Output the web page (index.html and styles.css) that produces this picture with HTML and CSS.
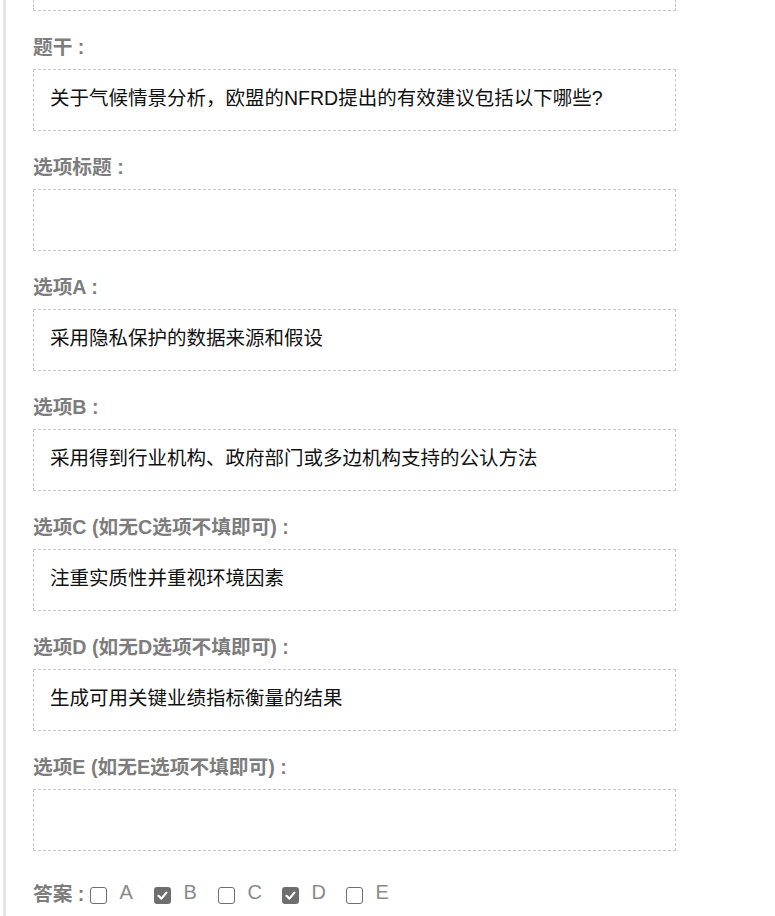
FILE: index.html
```html
<!DOCTYPE html>
<html lang="zh-CN">
<head>
    <meta charset="UTF-8">
    <meta name="viewport" content="width=device-width, initial-scale=1.0">
    <title>题目编辑</title>
    <link rel="stylesheet" href="styles.css">
</head>
<body>
    <div class="page">
        <div class="form">
            <!-- 上一个输入框（已滚出可视区域） -->
            <div class="field-box cut"></div>

            <div class="field">
                <div class="field-label">题干 :</div>
                <div class="field-box">关于气候情景分析，欧盟的NFRD提出的有效建议包括以下哪些?</div>
            </div>

            <div class="field">
                <div class="field-label">选项标题 :</div>
                <div class="field-box"></div>
            </div>

            <div class="field">
                <div class="field-label">选项A :</div>
                <div class="field-box">采用隐私保护的数据来源和假设</div>
            </div>

            <div class="field">
                <div class="field-label">选项B :</div>
                <div class="field-box">采用得到行业机构、政府部门或多边机构支持的公认方法</div>
            </div>

            <div class="field">
                <div class="field-label">选项C (如无C选项不填即可) :</div>
                <div class="field-box">注重实质性并重视环境因素</div>
            </div>

            <div class="field">
                <div class="field-label">选项D (如无D选项不填即可) :</div>
                <div class="field-box">生成可用关键业绩指标衡量的结果</div>
            </div>

            <div class="field">
                <div class="field-label">选项E (如无E选项不填即可) :</div>
                <div class="field-box"></div>
            </div>

            <!-- 答案 -->
            <div class="answer-row">
                <span class="field-label">答案 :</span>
                <label class="answer-opt"><span class="check"></span>A</label>
                <label class="answer-opt"><span class="check checked"><svg viewBox="0 0 17 17" width="17" height="17"><path d="M4.5 8.8 L7.4 11.6 L12.4 5.6" fill="none" stroke="#fff" stroke-width="2.2" stroke-linecap="round" stroke-linejoin="round"/></svg></span>B</label>
                <label class="answer-opt"><span class="check"></span>C</label>
                <label class="answer-opt"><span class="check checked"><svg viewBox="0 0 17 17" width="17" height="17"><path d="M4.5 8.8 L7.4 11.6 L12.4 5.6" fill="none" stroke="#fff" stroke-width="2.2" stroke-linecap="round" stroke-linejoin="round"/></svg></span>D</label>
                <label class="answer-opt"><span class="check"></span>E</label>
            </div>
        </div>
    </div>
</body>
</html>
```

FILE: styles.css
```css
* {
    margin: 0;
    padding: 0;
    box-sizing: border-box;
}

body {
    background: #fff;
    font-family: "Liberation Sans", "Noto Sans CJK SC", sans-serif;
    color: #111;
}

.page {
    margin-left: 3px;
    min-height: 916px;
    border-left: 3px solid #e6e6e6;
    padding-left: 27px;
}

.form {
    width: 643px;
}

/* 输入框 */
.field-box {
    height: 62px;
    border: 1px dashed #c8c8c8;
    padding: 0 16px 4px;
    line-height: 56px;
    font-size: 19.5px;
    white-space: nowrap;
}

.field-box.cut {
    height: 11px;
    padding: 0;
    border-top: none;
}

.field {
    padding-top: 24px;
}

.field-label {
    height: 24px;
    line-height: 24px;
    margin-bottom: 10px;
    font-size: 19.7px;
    font-weight: bold;
    color: #7d7d7d;
}

/* 答案 */
.answer-row {
    display: flex;
    align-items: center;
    height: 38px;
    margin-top: 24px;
}

.answer-row .field-label {
    margin-bottom: 0;
    margin-right: 6px;
}

.answer-opt {
    display: flex;
    align-items: center;
    width: 64px;
    padding-bottom: 4px;
    font-size: 20px;
    line-height: 24px;
    color: #8a8a8a;
}

.check {
    flex-shrink: 0;
    width: 17px;
    height: 17px;
    margin: 6px 12px 0 0;
    border: 1.5px solid #6f6f6f;
    border-radius: 3px;
    background: #fff;
    display: flex;
    align-items: center;
    justify-content: center;
}

.check.checked {
    border: none;
    background: #6e6e6e;
}
```
